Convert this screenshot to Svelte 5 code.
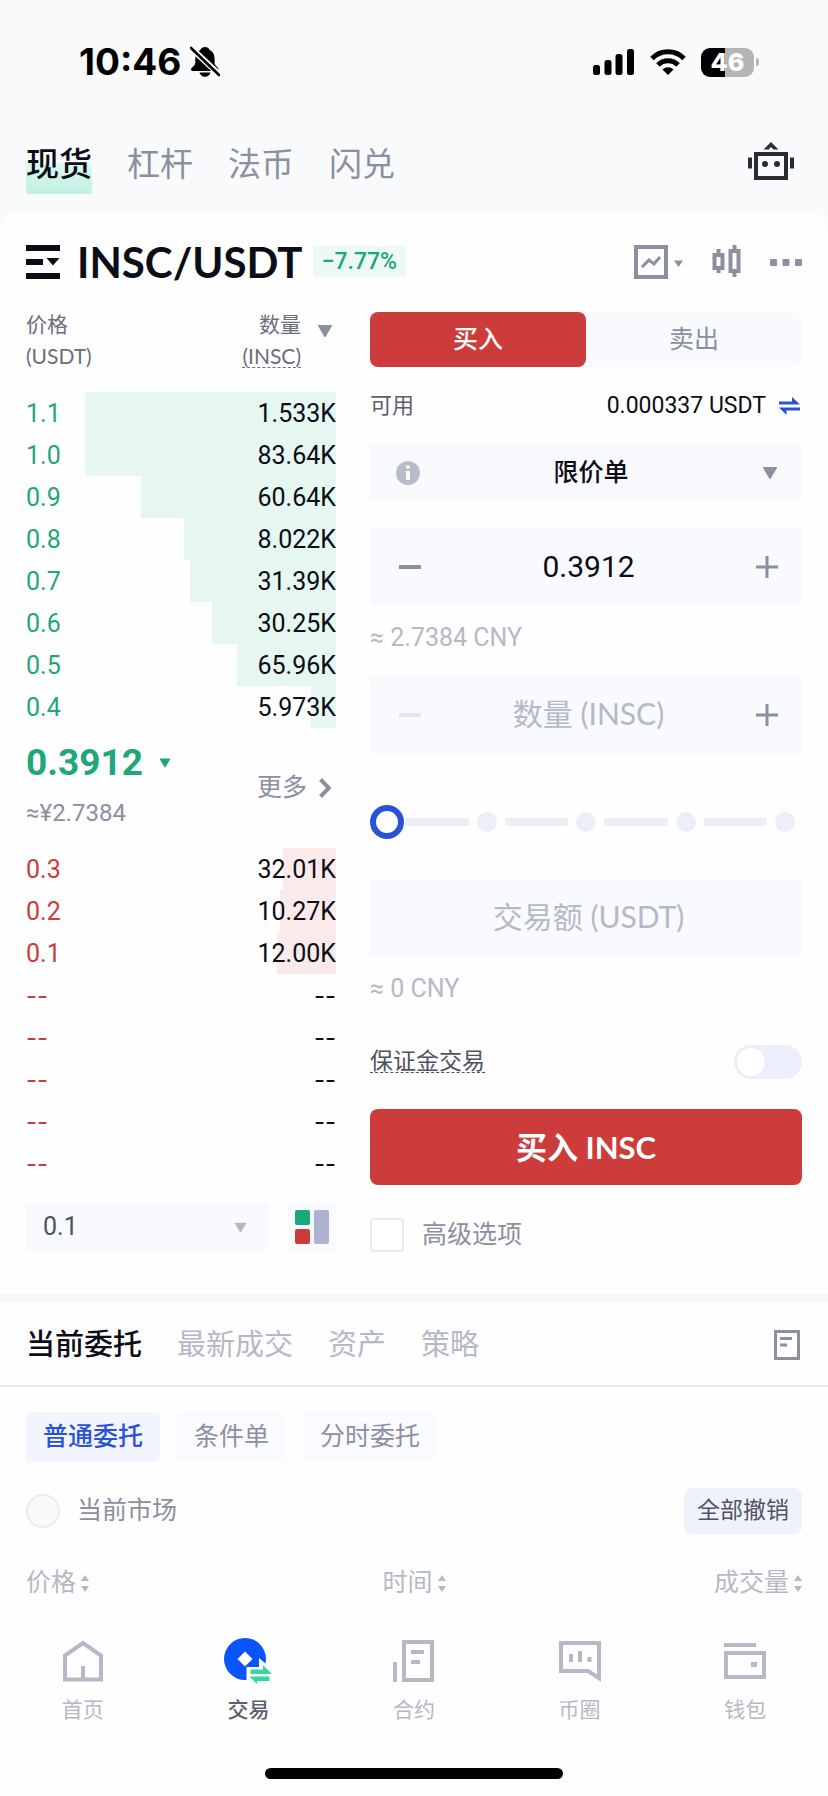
<!--
  Spot trading screen
  Order book on the left, order form on the right, open orders below.
-->
<script lang="ts">
  interface Level {
    price: string;
    amount: string;
    depth: number; // share of the row covered by the depth bar, in percent
  }

  const MARKETS = ["现货", "杠杆", "法币", "闪兑"];
  const ORDER_TABS = ["当前委托", "最新成交", "资产", "策略"];
  const ORDER_KINDS = ["普通委托", "条件单", "分时委托"];
  const ORDER_COLUMNS = ["价格", "时间", "成交量"];
  const NAV = [
    { id: "home", label: "首页" },
    { id: "trade", label: "交易" },
    { id: "futures", label: "合约" },
    { id: "social", label: "币圈" },
    { id: "wallet", label: "钱包" },
  ];

  const upper: Level[] = [
    { price: "1.1", amount: "1.533K", depth: 81 },
    { price: "1.0", amount: "83.64K", depth: 81 },
    { price: "0.9", amount: "60.64K", depth: 63 },
    { price: "0.8", amount: "8.022K", depth: 49 },
    { price: "0.7", amount: "31.39K", depth: 47 },
    { price: "0.6", amount: "30.25K", depth: 40 },
    { price: "0.5", amount: "65.96K", depth: 32 },
    { price: "0.4", amount: "5.973K", depth: 8 },
  ];

  const EMPTY: Level = { price: "--", amount: "--", depth: 0 };
  const lower: Level[] = [
    { price: "0.3", amount: "32.01K", depth: 17 },
    { price: "0.2", amount: "10.27K", depth: 18 },
    { price: "0.1", amount: "12.00K", depth: 19 },
    ...Array(5).fill(EMPTY),
  ];

  let market = $state("现货");
  let side = $state("buy");
  let orderTab = $state("当前委托");
  let orderKind = $state("普通委托");
  let price = $state("0.3912");
  let quantity = $state("");
  let total = $state("");
  let percent = $state(0);
</script>

{#snippet caret(size: number)}
  <svg class="caret" width={size} height={size} viewBox="0 0 16 16" aria-hidden="true">
    <path d="M1.5 2h13q1 0 .4 1L8.8 13.4q-.8 1.2-1.6 0L1.1 3q-.6-1 .4-1z" fill="currentColor" />
  </svg>
{/snippet}

{#snippet levels(rows: Level[])}
  {#each rows as row, i (i)}
    <tr class:empty={row.depth === 0} style="--depth: {row.depth}%">
      <td class="level-price">{row.price}</td>
      <td class="level-amount">{row.amount}</td>
    </tr>
  {/each}
{/snippet}

{#snippet plus()}
  <svg width="22" height="22" viewBox="0 0 22 22" aria-hidden="true">
    <path d="M0 11h22M11 0v22" stroke="currentColor" stroke-width="3" />
  </svg>
{/snippet}

{#snippet minus()}
  <svg width="22" height="22" viewBox="0 0 22 22" aria-hidden="true">
    <path d="M0 11h22" stroke="currentColor" stroke-width="4" />
  </svg>
{/snippet}

<div class="app">
  <div class="status-bar">
    <div class="status-left">
      <span class="clock">10:46</span>
      <svg width="30" height="32" viewBox="0 0 30 32" aria-label="静音">
        <path
          d="M15 1c2.200 0 4 1.300 4.600 3 3.600 1.600 5 5 5 9v4c0 2.500 4 4.500 4 6.500 0 1-.8 1.500-2 1.500H3c-1.300 0-2-.6-2-1.500 0-2 4.300-4 4.300-6.500v-4c0-4 1.500-7.400 5-9C11 2.300 12.800 1 15 1z"
        />
        <path d="M9.500 26.500h11c-.6 2.600-2.800 4.300-5.500 4.300s-4.900-1.700-5.500-4.300z" />
        <path d="M1 2l29 27" stroke="#f9fafc" stroke-width="6" />
        <path d="M1 2l28 27" stroke="#000" stroke-width="2.600" stroke-linecap="round" />
      </svg>
    </div>
    <div class="status-right">
      <svg width="42" height="28" viewBox="0 0 42 28" aria-label="信号">
        <rect x="0" y="17" width="7" height="10" rx="2.500" />
        <rect x="11.500" y="12" width="7" height="15" rx="2.500" />
        <rect x="22.500" y="6" width="7" height="21" rx="2.500" />
        <rect x="34" y="1" width="7" height="26" rx="2.500" />
      </svg>
      <svg width="36" height="28" viewBox="0 0 36 28" aria-label="Wi-Fi">
        <path d="M2 10.500a22.500 22.500 0 0 1 32 0" fill="none" stroke="#000" stroke-width="5" />
        <path d="M8 17a14 14 0 0 1 20 0" fill="none" stroke="#000" stroke-width="5" />
        <path d="M12.500 21.500a8 8 0 0 1 11 0L18 27z" />
      </svg>
      <div class="battery">
        <span class="battery-level">46</span>
        <span class="battery-cap"></span>
      </div>
    </div>
  </div>

  <nav class="markets" aria-label="市场">
    {#each MARKETS as name (name)}
      <button
        type="button"
        class="market"
        class:active={market === name}
        onclick={() => (market = name)}>{name}</button
      >
    {/each}
    <button type="button" class="robot" aria-label="机器人">
      <svg width="46" height="38" viewBox="0 0 46 38">
        <rect x="8" y="12" width="30" height="24" fill="none" stroke="#2a2c33" stroke-width="4" />
        <path d="M15.500 7.500L23 0l7.500 7.500h-5L23 5l-2.500 2.500z" fill="#2a2c33" />
        <path d="M2 15.500v11M44 15.500v11" stroke="#2a2c33" stroke-width="4" />
        <circle cx="17" cy="22" r="3" fill="#2a2c33" />
        <circle cx="29" cy="22" r="3" fill="#2a2c33" />
      </svg>
    </button>
  </nav>

  <main class="card">
    <header class="pair">
      <button type="button" class="icon-button dark" aria-label="选择交易对">
        <svg width="34" height="34" viewBox="0 0 34 34">
          <path d="M0 3h34M0 17h17M0 31h34" stroke="currentColor" stroke-width="6" />
          <path d="M20.500 13h13L27 20.500z" fill="currentColor" />
        </svg>
      </button>
      <h1>INSC/USDT</h1>
      <span class="change">−7.77%</span>
      <div class="pair-tools">
        <button type="button" class="icon-button" aria-label="图表">
          <svg width="50" height="34" viewBox="0 0 50 34">
            <rect x="2" y="2" width="30" height="30" fill="none" stroke="currentColor" stroke-width="4" />
            <path d="M8 22l7-7 5 4 6-7" fill="none" stroke="currentColor" stroke-width="3" />
            <path d="M40 15.500h9L44.500 22z" fill="currentColor" />
          </svg>
        </button>
        <button type="button" class="icon-button" aria-label="K线">
          <svg width="30" height="34" viewBox="0 0 30 34">
            <rect x="2.500" y="10" width="8" height="13" fill="none" stroke="currentColor" stroke-width="4" />
            <rect x="18.500" y="6" width="8" height="20" fill="none" stroke="currentColor" stroke-width="4" />
            <path d="M6.500 4v5M6.500 24v4M22.500 0v5M22.500 27v5" stroke="currentColor" stroke-width="4" />
          </svg>
        </button>
        <button type="button" class="icon-button" aria-label="更多">
          <svg width="32" height="8" viewBox="0 0 32 8">
            <rect width="7" height="7" y="1" rx="1" fill="currentColor" />
            <rect x="12.500" width="7" height="7" y="1" rx="1" fill="currentColor" />
            <rect x="25" width="7" height="7" y="1" rx="1" fill="currentColor" />
          </svg>
        </button>
      </div>
    </header>

    <div class="trade">
      <section class="book" aria-label="盘口">
        <table class="levels up">
          <thead>
            <tr>
              <th scope="col">
                <span class="line">价格</span>
                <span class="line">(USDT)</span>
              </th>
              <th scope="col">
                <div class="amount-head">
                  <div>
                    <span class="line">数量</span>
                    <span class="line dashed">(INSC)</span>
                  </div>
                  {@render caret(16)}
                </div>
              </th>
            </tr>
          </thead>
          <tbody>{@render levels(upper)}</tbody>
        </table>

        <div class="last">
          <div>
            <div class="last-price">0.3912 {@render caret(12)}</div>
            <div class="last-fiat">≈¥2.7384</div>
          </div>
          <a class="more" href="#book">
            更多
            <svg width="12" height="20" viewBox="0 0 12 20" aria-hidden="true">
              <path d="M1.500 1.500L10 10l-8.500 8.500" fill="none" stroke="currentColor" stroke-width="4" />
            </svg>
          </a>
        </div>

        <table class="levels down" aria-label="0.3912 以下">
          <tbody>{@render levels(lower)}</tbody>
        </table>

        <div class="book-tools">
          <div class="field step">
            <select aria-label="价格精度">
              <option>0.1</option>
              <option>0.01</option>
            </select>
            {@render caret(13)}
          </div>
          <button type="button" class="layout" aria-label="盘口布局">
            <svg width="34" height="34" viewBox="0 0 34 34">
              <rect width="15" height="15" rx="2" fill="#18a97a" />
              <rect y="19" width="15" height="15" rx="2" fill="#cb3c3b" />
              <rect x="19" width="15" height="34" rx="2" fill="#aeb4cf" />
            </svg>
          </button>
        </div>
      </section>

      <form class="order" onsubmit={(e) => e.preventDefault()}>
        <div class="sides">
          <button type="button" class:active={side === "buy"} onclick={() => (side = "buy")}>买入</button>
          <button type="button" class:active={side === "sell"} onclick={() => (side = "sell")}>卖出</button>
        </div>

        <div class="available">
          <span>可用</span>
          <span class="balance">0.000337 USDT</span>
          <button type="button" class="swap" aria-label="划转">
            <svg width="21" height="18" viewBox="0 0 21 18">
              <path d="M0 4.500h13V0l8 7.500H0zM21 10.500H0L7.500 18v-4.500H21z" fill="currentColor" />
            </svg>
          </button>
        </div>

        <div class="field type">
          <svg width="24" height="24" viewBox="0 0 24 24" aria-hidden="true">
            <circle cx="12" cy="12" r="12" fill="#b8bcc8" />
            <path d="M12 10v9" stroke="#f9fafe" stroke-width="4" />
            <path d="M9.500 11h2.500" stroke="#f9fafe" stroke-width="2" />
            <circle cx="12" cy="6" r="2" fill="#f9fafe" />
          </svg>
          <select aria-label="委托类型">
            <option>限价单</option>
            <option>市价单</option>
          </select>
          {@render caret(16)}
        </div>

        <div class="field number">
          <button type="button" aria-label="减少价格">{@render minus()}</button>
          <input type="text" inputmode="decimal" aria-label="价格" bind:value={price} />
          <button type="button" aria-label="增加价格">{@render plus()}</button>
        </div>
        <p class="hint">≈ 2.7384 CNY</p>

        <div class="field number">
          <button type="button" aria-label="减少数量" disabled>{@render minus()}</button>
          <input type="text" inputmode="decimal" aria-label="数量" placeholder="数量 (INSC)" bind:value={quantity} />
          <button type="button" aria-label="增加数量">{@render plus()}</button>
        </div>

        <div class="slider">
          <div class="stops" aria-hidden="true">
            <i class="dot"></i>
            {#each Array(4) as _, i (i)}
              <i class="segment"></i>
              <i class="dot"></i>
            {/each}
          </div>
          <input type="range" min="0" max="100" aria-label="仓位比例" bind:value={percent} />
        </div>

        <div class="field number">
          <input type="text" inputmode="decimal" aria-label="交易额" placeholder="交易额 (USDT)" bind:value={total} />
        </div>
        <p class="hint">≈ 0 CNY</p>

        <div class="margin">
          <label class="dashed" for="margin">保证金交易</label>
          <input id="margin" class="switch" type="checkbox" />
        </div>

        <button type="submit" class="submit">买入 INSC</button>

        <label class="advanced">
          <input type="checkbox" />
          高级选项
        </label>
      </form>
    </div>
  </main>

  <section class="orders">
    <div class="order-tabs">
      {#each ORDER_TABS as tab (tab)}
        <button type="button" class:active={orderTab === tab} onclick={() => (orderTab = tab)}>{tab}</button>
      {/each}
      <button type="button" class="history" aria-label="历史委托">
        <svg width="26" height="30" viewBox="0 0 26 30">
          <rect x="1.500" y="1.500" width="23" height="27" fill="none" stroke="currentColor" stroke-width="3" />
          <path d="M6 8.500h12M6 15h7" stroke="currentColor" stroke-width="3" />
        </svg>
      </button>
    </div>

    <div class="order-body">
      <div class="kinds">
        {#each ORDER_KINDS as kind (kind)}
          <button type="button" class:active={orderKind === kind} onclick={() => (orderKind = kind)}>{kind}</button>
        {/each}
      </div>

      <div class="filter">
        <label>
          <input type="checkbox" />
          当前市场
        </label>
        <button type="button">全部撤销</button>
      </div>

      <div class="columns">
        {#each ORDER_COLUMNS as column (column)}
          <button type="button">
            {column}
            <svg width="8" height="17" viewBox="0 0 8 17" aria-hidden="true">
              <path d="M0 6l4-6 4 6zM0 11h8l-4 6z" fill="currentColor" />
            </svg>
          </button>
        {/each}
      </div>
    </div>
  </section>

  <nav class="tab-bar" aria-label="主导航">
    {#each NAV as item (item.id)}
      <a href="#{item.id}" class:active={item.id === "trade"}>
        <svg width="48" height="48" viewBox="0 0 48 48" aria-hidden="true">
          {#if item.id === "home"}
            <path d="M6 43.500V19.500L24 7l18 12.500v24z" fill="none" stroke="currentColor" stroke-width="4" />
            <path d="M24 30v13" stroke="currentColor" stroke-width="4" />
          {:else if item.id === "trade"}
            <circle cx="21" cy="23" r="21" fill="#0a54fb" />
            <path d="M21 15.500l7.500 7.500-7.500 7.500-7.500-7.500z" fill="#fff" />
            <path d="M22.500 48V31H35v-9l13 11v15z" fill="#fff" />
            <path d="M26.500 33.500H39V29l9 9H26.500zM45.500 40.500h-20L33 48v-3h12.500z" fill="#35d6a4" />
          {:else if item.id === "futures"}
            <path d="M5 26v20" stroke="currentColor" stroke-width="4" />
            <rect x="14" y="6" width="28" height="38" fill="none" stroke="currentColor" stroke-width="4" />
            <path d="M21 16h13M21 26h9" stroke="currentColor" stroke-width="4" />
          {:else if item.id === "social"}
            <path d="M5 7h38v35l-11-7H5z" fill="none" stroke="currentColor" stroke-width="4" />
            <path d="M15 18v8M24 15v11M33.500 21v5" stroke="currentColor" stroke-width="4" />
          {:else}
            <path d="M3 9h32" stroke="currentColor" stroke-width="4" />
            <rect x="5" y="17" width="38" height="24" fill="none" stroke="currentColor" stroke-width="4" />
            <rect x="30" y="26" width="6" height="5" fill="currentColor" />
          {/if}
        </svg>
        {item.label}
      </a>
    {/each}
  </nav>

  <div class="home-bar"></div>
</div>

<style>
  :global(body) {
    margin: 0;
    background: #fefefe;
  }

  .app {
    --ink: #0b0d17;
    --grey: #8b90a0;
    --pale: #b5b9c6;
    --field: #f9fafe;
    --green: #1fa67a;
    --red: #cb3c3b;
    --blue: #2a52d6;
    --latin: Lato, "Noto Sans CJK SC", sans-serif;
    --digits: Roboto, "Noto Sans CJK SC", sans-serif;
    padding-bottom: 17px;
    background: linear-gradient(#f9fafc 300px, #fefefe 300px);
    color: var(--ink);
    font: 25px/32px var(--digits);
  }

  .app *,
  .app *::before {
    box-sizing: border-box;
  }

  button,
  input,
  select {
    margin: 0;
    padding: 0;
    border: 0;
    background: none;
    color: inherit;
    font: inherit;
    appearance: none;
  }

  button,
  select {
    cursor: pointer;
  }

  svg {
    display: block;
    flex: none;
  }

  /* Status bar */
  .status-bar {
    display: flex;
    justify-content: space-between;
    align-items: center;
    height: 124px;
    padding: 0 69px 0 79px;
  }

  .status-left {
    display: flex;
    align-items: center;
    gap: 9px;
  }

  .clock {
    font: 700 37px/44px Inter, sans-serif;
    color: #000;
  }

  .status-right {
    display: flex;
    align-items: center;
    gap: 15px;
  }

  .battery {
    display: flex;
    align-items: center;
    gap: 2px;
  }

  .battery-level {
    width: 53px;
    border-radius: 9px;
    background: linear-gradient(90deg, #000 46%, #b5b5b6 46%);
    color: #fff;
    font: 800 25px/29px Inter, sans-serif;
    text-align: center;
  }

  .battery-cap {
    width: 3px;
    height: 8px;
    border-radius: 0 3px 3px 0;
    background: #b5b5b6;
  }

  /* Market tabs */
  .markets {
    display: flex;
    gap: 35px;
    padding: 8px 34px 17px 26px;
  }

  .market {
    height: 62px;
    padding-top: 3px;
    color: var(--grey);
    font-size: 33px;
  }

  .market.active {
    border-radius: 2px;
    background: linear-gradient(transparent 50%, #dcf8ef 50%, #c0f1e2);
    color: var(--ink);
    font-weight: 500;
  }

  .robot {
    margin-left: auto;
    padding-bottom: 4px;
  }

  /* Trading pair */
  .card {
    padding: 0 26px 42px;
    border-radius: 24px 24px 0 0;
    background: #fefefe;
  }

  .pair {
    display: flex;
    align-items: center;
    height: 101px;
  }

  h1 {
    margin: 0 10px 0 17px;
    font: 700 42px/52px var(--latin);
  }

  .change {
    padding: 0 9px;
    border-radius: 3px;
    background: #ecf9f5;
    color: var(--green);
    font-size: 23px;
    font-weight: 500;
    line-height: 31px;
  }

  .pair-tools {
    display: flex;
    align-items: center;
    gap: 28px;
    margin-left: auto;
  }

  .icon-button {
    color: var(--grey);
  }

  .icon-button.dark {
    color: var(--ink);
  }

  .trade {
    display: grid;
    grid-template-columns: 310fr 432fr;
    gap: 34px;
  }

  .caret {
    color: var(--grey);
  }

  .dashed {
    text-decoration: underline dashed 1px;
    text-underline-offset: 3px;
    text-decoration-skip-ink: none;
  }

  /* Order book */
  .book {
    min-width: 0;
  }

  .levels {
    width: 100%;
    border-collapse: collapse;
  }

  .levels th {
    padding: 0 0 24px;
    color: #6b6f7d;
    font: 400 21px/24px var(--latin);
    text-align: left;
    vertical-align: top;
  }

  .line {
    display: block;
  }

  .line + .line {
    margin-top: 8px;
  }

  .amount-head {
    display: flex;
    justify-content: flex-end;
    gap: 16px;
    padding-right: 3px;
    text-align: right;
  }

  .amount-head .caret {
    margin-top: 11px;
  }

  .levels tbody tr {
    background: linear-gradient(to left, var(--bar) var(--depth), transparent var(--depth));
  }

  .levels td {
    height: 42px;
    padding: 2px 0 0;
    font-size: 25px;
  }

  .levels .empty td {
    font-family: Inter, sans-serif;
    font-size: 24px;
  }

  .up {
    --bar: #e6f6f1;
    --tone: var(--green);
  }

  .down {
    --bar: #fbeaea;
    --tone: var(--red);
  }

  .level-price {
    color: var(--tone);
  }

  .level-amount {
    text-align: right;
  }

  .last {
    display: flex;
    justify-content: space-between;
    align-items: center;
    height: 120px;
    padding-right: 5px;
  }

  .last-price {
    display: flex;
    align-items: center;
    gap: 16px;
    margin-bottom: 4px;
    color: var(--green);
    font-size: 37px;
    font-weight: 700;
    line-height: 46px;
  }

  .last-price .caret {
    color: inherit;
  }

  .last-fiat {
    color: var(--grey);
    font-size: 24px;
    line-height: 46px;
  }

  .more {
    display: flex;
    align-items: center;
    gap: 12px;
    color: var(--grey);
    text-decoration: none;
  }

  .field {
    display: flex;
    align-items: center;
    border-radius: 4px;
    background: var(--field);
  }

  .field select,
  .field input {
    flex: 1;
    min-width: 0;
    outline: none;
  }

  .book-tools {
    display: flex;
    gap: 19px;
    margin-top: 19px;
  }

  .step {
    flex: 1;
    height: 48px;
    padding: 0 22px 0 17px;
    color: #4f5361;
  }

  .step .caret {
    color: var(--pale);
  }

  .layout {
    height: 48px;
    padding: 7px;
    border-radius: 4px;
    background: var(--field);
  }

  /* Order form */
  .order {
    min-width: 0;
  }

  .sides {
    display: flex;
    border-radius: 8px;
    background: var(--field);
  }

  .sides button {
    flex: 1;
    height: 55px;
    border-radius: 8px;
    color: var(--grey);
  }

  .sides .active {
    background: var(--red);
    color: #fff;
    font-weight: 500;
  }

  .available {
    display: flex;
    align-items: center;
    height: 77px;
    padding-right: 2px;
    color: #5c606e;
    font-size: 22px;
  }

  .balance {
    margin-left: auto;
    color: var(--ink);
    font-size: 23px;
  }

  .swap {
    margin-left: 13px;
    color: var(--blue);
  }

  .type {
    height: 57px;
    margin-bottom: 27px;
    padding: 0 24px 0 26px;
  }

  .type select {
    font-weight: 500;
    text-align-last: center;
  }

  .number {
    height: 78px;
    padding: 0 24px 0 29px;
    color: var(--grey);
  }

  .number input {
    color: var(--ink);
    font-size: 30px;
    text-align: center;
  }

  .number input::placeholder {
    color: var(--pale);
    font-family: var(--latin);
    opacity: 1;
  }

  .number button:disabled {
    color: #e3e5ec;
  }

  .hint {
    margin: 0 0 6px;
    color: var(--pale);
    line-height: 64px;
  }

  .slider {
    display: grid;
    margin: 51px 0 40px;
  }

  .slider > * {
    grid-area: 1 / 1;
  }

  .stops {
    display: flex;
    align-items: center;
    gap: 8px;
    padding: 0 7px;
  }

  .dot {
    width: 20px;
    height: 20px;
    border-radius: 50%;
    background: #eceff7;
  }

  .segment {
    flex: 1;
    height: 8px;
    border-radius: 2px;
    background: #eceef5;
  }

  .slider input {
    width: 100%;
    height: 34px;
  }

  .slider input::-webkit-slider-thumb {
    box-sizing: border-box;
    width: 34px;
    height: 34px;
    border: 6px solid var(--blue);
    border-radius: 50%;
    background: #fff;
    appearance: none;
  }

  .margin {
    display: flex;
    justify-content: space-between;
    align-items: center;
    margin: 24px 0 30px;
    color: #4f5361;
    font-size: 23px;
  }

  .switch {
    width: 68px;
    height: 34px;
    padding: 3px;
    border-radius: 17px;
    background: #eceffb;
  }

  .switch::before {
    content: "";
    display: block;
    width: 28px;
    height: 28px;
    border-radius: 50%;
    background: #fff;
  }

  .switch:checked::before {
    margin-left: auto;
  }

  .submit {
    width: 100%;
    height: 76px;
    border-radius: 8px;
    background: var(--red);
    color: #fff;
    font: 700 31px/40px var(--latin);
  }

  .advanced {
    display: flex;
    align-items: center;
    gap: 18px;
    margin-top: 33px;
    color: var(--grey);
  }

  .advanced input {
    width: 34px;
    height: 34px;
    border: 2px solid #e9eaef;
    border-radius: 4px;
    background: #fff;
  }

  .advanced input:checked,
  .filter input:checked {
    background: var(--blue);
  }

  /* Open orders */
  .orders {
    border-top: 8px solid #f8f8fb;
    background: #fefefe;
  }

  .order-tabs {
    display: flex;
    align-items: center;
    gap: 35px;
    height: 85px;
    padding: 3px 28px 0 26px;
    border-bottom: 2px solid #ebecef;
    color: var(--pale);
    font-size: 29px;
  }

  .order-tabs .active {
    color: var(--ink);
    font-weight: 500;
  }

  .history {
    margin-left: auto;
    color: var(--grey);
  }

  .order-body {
    padding: 25px 26px 0;
  }

  .kinds {
    display: flex;
    gap: 17px;
  }

  .kinds button {
    height: 50px;
    padding: 0 17px;
    border-radius: 5px;
    background: #fafbfe;
    color: var(--grey);
  }

  .kinds .active {
    background: #f2f5fe;
    color: var(--blue);
    font-weight: 500;
  }

  .filter {
    display: flex;
    justify-content: space-between;
    align-items: center;
    margin-top: 26px;
    color: var(--grey);
  }

  .filter label {
    display: flex;
    align-items: center;
    gap: 17px;
  }

  .filter input {
    width: 34px;
    height: 34px;
    border: 2px solid #eaecf0;
    border-radius: 50%;
    background: #f8fafb;
  }

  .filter button {
    height: 46px;
    padding: 0 13px;
    border-radius: 8px;
    background: #eff1fb;
    color: #4f5361;
    font-size: 23px;
  }

  .columns {
    display: grid;
    grid-template-columns: 1fr auto 1fr;
    margin-top: 30px;
    color: var(--pale);
  }

  .columns button {
    display: flex;
    align-items: center;
    gap: 5px;
    height: 38px;
  }

  .columns button:last-child {
    justify-content: flex-end;
  }

  /* Bottom navigation */
  .tab-bar {
    display: flex;
    padding: 34px 0 44px;
    background: #fefefe;
  }

  .tab-bar a {
    display: flex;
    flex: 1;
    flex-direction: column;
    align-items: center;
    gap: 12px;
    color: var(--pale);
    font-size: 21px;
    line-height: 28px;
    text-decoration: none;
  }

  .tab-bar svg {
    overflow: visible;
  }

  .tab-bar .active {
    color: #5c606e;
    font-weight: 500;
  }

  .home-bar {
    width: 36%;
    height: 11px;
    margin: 0 auto;
    border-radius: 6px;
    background: #000;
  }
</style>
